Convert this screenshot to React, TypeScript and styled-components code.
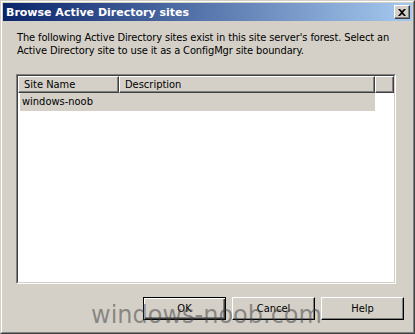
import styled, { createGlobalStyle } from "styled-components";

const GlobalStyle = createGlobalStyle`
  html, body {
    margin: 0;
    padding: 0;
    background: #d4d0c8;
  }
  body {
    font-family: "DejaVu Sans Condensed", "DejaVu Sans", sans-serif;
    font-size: 11px;
    color: #000;
  }
`;

const Window = styled.div`
  position: relative;
  width: 415px;
  height: 334px;
  box-sizing: border-box;
  background: #d4d0c8;
  border-top: 1px solid #d4d0c8;
  border-left: 1px solid #d4d0c8;
  border-right: 1px solid #404040;
  border-bottom: 1px solid #404040;
  overflow: hidden;
`;

const Frame = styled.div`
  height: 100%;
  box-sizing: border-box;
  border-top: 1px solid #fff;
  border-left: 1px solid #fff;
  border-right: 1px solid #808080;
  border-bottom: 1px solid #808080;
  padding: 1px;
  display: flex;
  flex-direction: column;
`;

const TitleBar = styled.div`
  height: 18px;
  flex: none;
  display: flex;
  align-items: center;
  justify-content: space-between;
  padding: 0 2px 0 3px;
  background: linear-gradient(to right, #0a246a, #a6caf0);
`;

const Title = styled.span`
  color: #fff;
  font-weight: bold;
  font-size: 11px;
  font-family: "DejaVu Sans", sans-serif;
`;

const CloseButton = styled.div`
  width: 16px;
  height: 14px;
  box-sizing: border-box;
  background: #d4d0c8;
  border-top: 1px solid #fff;
  border-left: 1px solid #fff;
  border-right: 1px solid #404040;
  border-bottom: 1px solid #404040;
  box-shadow: inset -1px -1px 0 #808080;
  display: flex;
  align-items: center;
  justify-content: center;
`;

const Body = styled.div`
  flex: 1;
  display: flex;
  flex-direction: column;
  padding: 10px 16px 0 13px;
`;

const Intro = styled.p`
  margin: 0;
  line-height: 13px;
  padding-left: 1px;
  letter-spacing: -0.12px;
  white-space: nowrap;
`;

const ListView = styled.div`
  margin-top: 17px;
  height: 210px;
  flex: none;
  box-sizing: border-box;
  border-top: 1px solid #808080;
  border-left: 1px solid #808080;
  border-right: 1px solid #fff;
  border-bottom: 1px solid #fff;
  display: flex;
  flex-direction: column;
`;

const ListInner = styled.div`
  flex: 1;
  display: flex;
  flex-direction: column;
  border-top: 1px solid #404040;
  border-left: 1px solid #404040;
  border-right: 1px solid #d4d0c8;
  border-bottom: 1px solid #d4d0c8;
  background: #fff;
`;

const HeaderRow = styled.div`
  display: flex;
  height: 17px;
  flex: none;
`;

const HeaderCell = styled.div<{ $width?: number }>`
  ${(p) => (p.$width ? `width: ${p.$width}px;` : "flex: 1;")}
  flex-shrink: 0;
  box-sizing: border-box;
  background: #d4d0c8;
  border-top: 1px solid #fff;
  border-left: 1px solid #fff;
  border-right: 1px solid #404040;
  border-bottom: 1px solid #404040;
  box-shadow: inset -1px -1px 0 #808080;
  padding: 1px 0 0 5px;
  line-height: 13px;
  white-space: nowrap;
`;

const Row = styled.div<{ $selected?: boolean }>`
  margin: 0 0 0 2px;
  width: 355px;
  height: 18px;
  line-height: 18px;
  padding-left: 2px;
  box-sizing: border-box;
  background: ${(p) => (p.$selected ? "#d4d0c8" : "transparent")};
`;

const ButtonRow = styled.div`
  display: flex;
  justify-content: flex-end;
  gap: 6px;
  margin: 13px -8px 0 0;
`;

const Button = styled.button<{ $default?: boolean }>`
  width: 83px;
  height: 23px;
  box-sizing: border-box;
  font-family: "DejaVu Sans Condensed", "DejaVu Sans", sans-serif;
  font-size: 11px;
  color: #000;
  background: #d4d0c8;
  padding: 0;
  border-top: 1px solid ${(p) => (p.$default ? "#000" : "#fff")};
  border-left: 1px solid ${(p) => (p.$default ? "#000" : "#fff")};
  border-right: 1px solid #000;
  border-bottom: 1px solid #000;
  box-shadow: ${(p) =>
    p.$default
      ? "inset 1px 1px 0 #fff, inset -1px -1px 0 #404040, inset -2px -2px 0 #808080"
      : "inset -1px -1px 0 #808080"};
`;

const Watermark = styled.div`
  position: absolute;
  left: 90px;
  top: 300px;
  font-family: "DejaVu Sans", sans-serif;
  font-size: 24px;
  line-height: 28px;
  color: rgba(60, 60, 60, 0.5);
  pointer-events: none;
  white-space: nowrap;
`;

export default function App() {
  return (
    <>
      <GlobalStyle />
      <Window>
        <Frame>
          <TitleBar>
            <Title>Browse Active Directory sites</Title>
            <CloseButton>
              <svg width="8" height="7" viewBox="0 0 8 7">
                <path d="M0 0h2l2 2 2-2h2L5 3.5 8 7H6L4 5 2 7H0l3-3.5z" fill="#000" />
              </svg>
            </CloseButton>
          </TitleBar>
          <Body>
            <Intro>
              The following Active Directory sites exist in this site server's forest. Select an
              <br />
              Active Directory site to use it as a ConfigMgr site boundary.
            </Intro>
            <ListView>
              <ListInner>
                <HeaderRow>
                  <HeaderCell $width={101}>Site Name</HeaderCell>
                  <HeaderCell $width={256}>Description</HeaderCell>
                  <HeaderCell />
                </HeaderRow>
                <Row $selected>windows-noob</Row>
              </ListInner>
            </ListView>
            <ButtonRow>
              <Button $default>OK</Button>
              <Button>Cancel</Button>
              <Button>Help</Button>
            </ButtonRow>
          </Body>
        </Frame>
        <Watermark>windows-noob.com</Watermark>
      </Window>
    </>
  );
}
